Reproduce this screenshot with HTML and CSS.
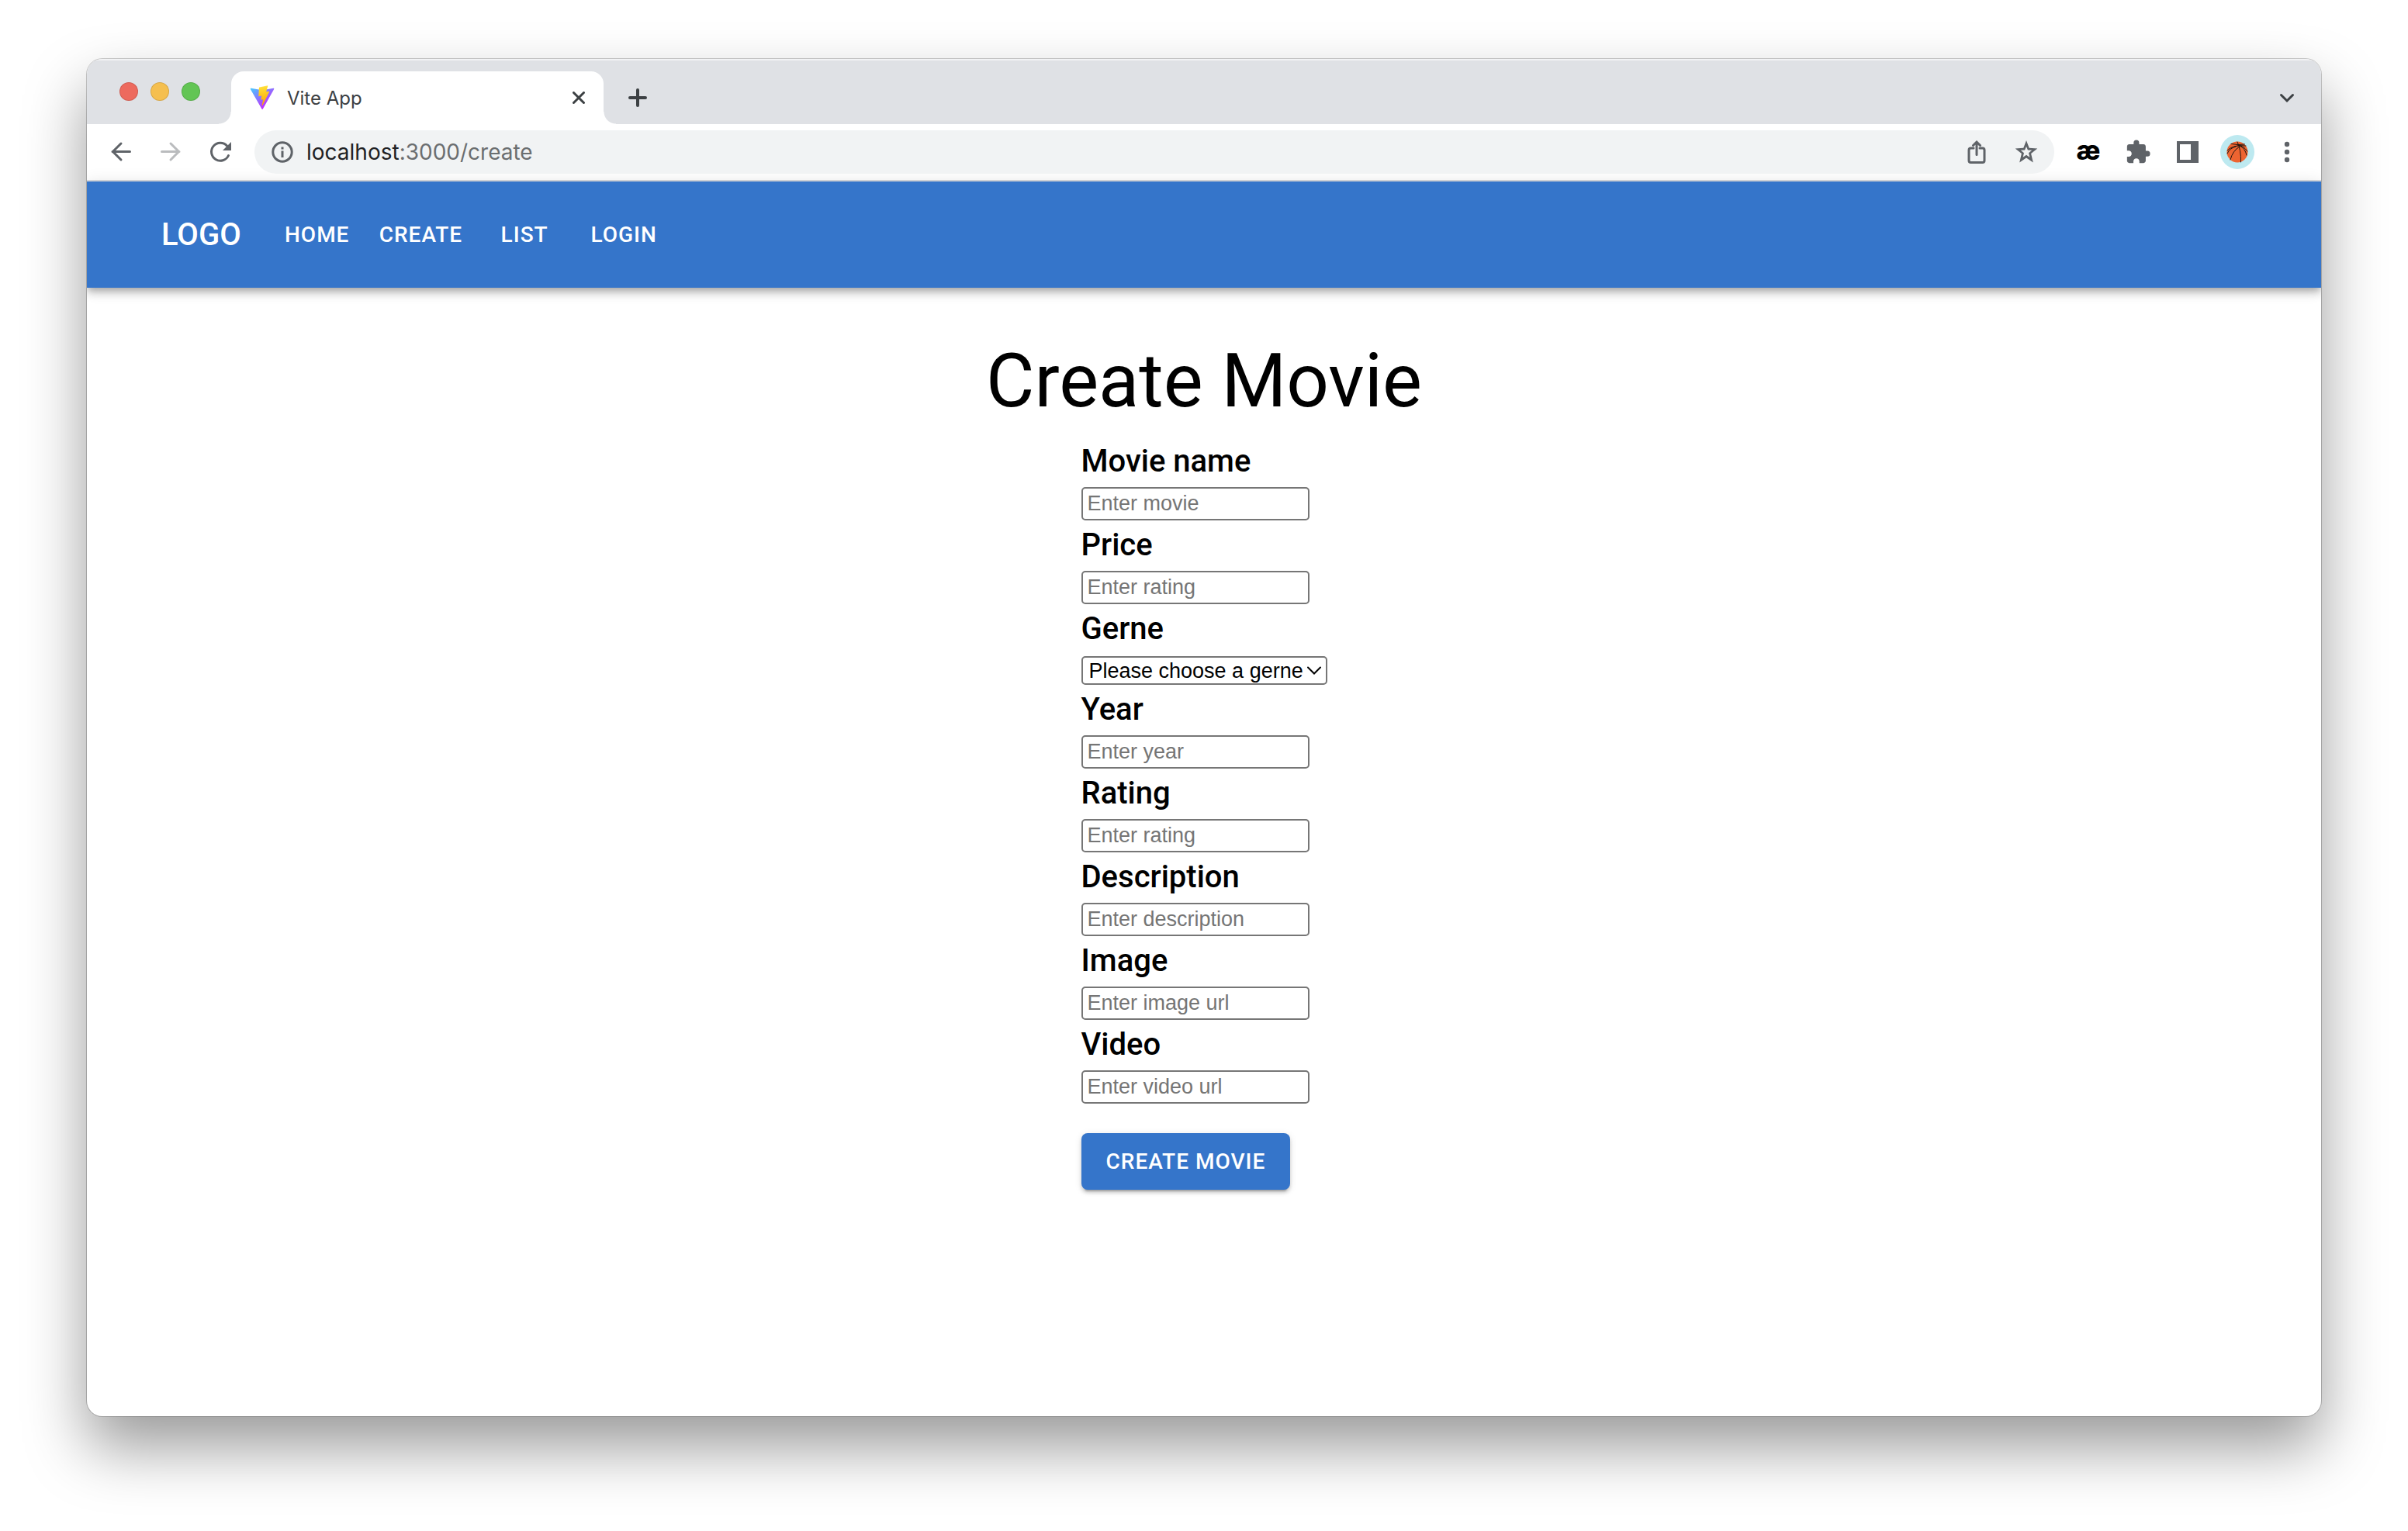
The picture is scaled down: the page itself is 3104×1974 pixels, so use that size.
FILE: index.html
```html
<!DOCTYPE html>
<html lang="en">
<head>
<meta charset="utf-8">
<meta name="viewport" content="width=device-width, initial-scale=1">
<title>Vite App</title>
<link rel="stylesheet" href="styles.css">
</head>
<body>
<div class="window">
  <div class="tab-strip">
    <div class="lights">
      <span class="light light-close"></span>
      <span class="light light-minimize"></span>
      <span class="light light-zoom"></span>
    </div>
    <div class="tab">
      <svg class="favicon" viewBox="0 0 410 404" aria-hidden="true">
        <defs>
          <linearGradient id="vite-a" x1="6" y1="33" x2="235" y2="344" gradientUnits="userSpaceOnUse"><stop stop-color="#41d1ff"/><stop offset="1" stop-color="#bd34fe"/></linearGradient>
          <linearGradient id="vite-b" x1="194" y1="9" x2="236" y2="293" gradientUnits="userSpaceOnUse"><stop stop-color="#ffea83"/><stop offset=".083" stop-color="#ffdd35"/><stop offset="1" stop-color="#ffa800"/></linearGradient>
        </defs>
        <path fill="url(#vite-a)" d="M399.641 59.525 215.643 388.545c-3.799 6.793-13.559 6.833-17.415.073L10.582 59.556c-4.2-7.366 2.098-16.293 10.446-14.801l184.195 32.923c1.175.21 2.378.208 3.553-.006l180.343-32.87c8.319-1.517 14.649 7.337 10.522 14.723z"/>
        <path fill="url(#vite-b)" d="M292.965 1.574 156.801 28.255c-2.238.439-3.906 2.332-4.04 4.609l-8.376 141.464c-.197 3.332 2.863 5.918 6.115 5.168l37.91-8.749c3.547-.818 6.752 2.306 6.023 5.873l-11.263 55.153c-.758 3.712 2.727 6.886 6.352 5.785l23.415-7.114c3.63-1.102 7.118 2.081 6.35 5.796l-17.899 86.633c-1.12 5.419 6.088 8.374 9.094 3.728l2.008-3.103 110.954-221.428c1.858-3.707-1.346-7.935-5.418-7.15l-39.022 7.532c-3.667.707-6.787-2.708-5.752-6.296l25.469-88.291c1.036-3.594-2.095-7.012-5.756-6.291z"/>
      </svg>
      <span class="tab-title">Vite App</span>
      <button class="tab-close" aria-label="Close tab"><svg viewBox="0 0 16 16"><path d="M1.500 1.500l13 13m0-13l-13 13"/></svg></button>
    </div>
    <button class="tool strip-tool" aria-label="New tab"><svg viewBox="0 0 56 56"><path class="bold" d="M28 18v20M18 28h20"/></svg></button>
    <button class="tool strip-tool strip-end" aria-label="Search tabs"><svg viewBox="0 0 56 56"><path d="M20.500 24.500l7.500 7.500 7.500-7.500"/></svg></button>
  </div>

  <div class="toolbar">
    <button class="tool" aria-label="Back"><svg viewBox="0 0 56 56"><path d="M39.500 27.500H17M28 17l-10.500 10.500L28 38"/></svg></button>
    <button class="tool tool-off" aria-label="Forward"><svg viewBox="0 0 56 56"><path d="M16.500 27.500H39M28 17l10.500 10.500L28 38"/></svg></button>
    <button class="tool" aria-label="Reload"><svg viewBox="0 0 56 56"><path d="M38.500 32.500A11.500 11.500 0 1 1 36.500 20"/><path class="solid" d="M42 15v11H31z"/></svg></button>
    <div class="omnibox">
      <svg class="info" viewBox="0 0 28 28" aria-hidden="true"><circle cx="14" cy="14" r="12.200"/><path d="M14 12.500v8.500M14 7.500v3"/></svg>
      <span class="url">localhost<span class="url-path">:3000/create</span></span>
      <button class="tool" aria-label="Share"><svg viewBox="0 0 56 56"><path d="M24 23h-3.500a2.500 2.500 0 0 0-2.500 2.500v13.500a2.500 2.500 0 0 0 2.500 2.500h15a2.500 2.500 0 0 0 2.500-2.500v-13.500a2.500 2.500 0 0 0-2.500-2.500h-3.500M28 31.500v-16M23.500 19.500l4.500-4.500 4.500 4.500"/></svg></button>
      <button class="tool" aria-label="Bookmark"><svg viewBox="0 0 56 56"><path class="solid" fill-rule="evenodd" d="M28 13l3.700 9.700 10.600.8-8.200 6.600 2.700 11.400L28 35.600l-8.800 5.900 2.700-11.400-8.200-6.600 10.600-.8zM28 20.700l-1.900 4.700-5.300.4 4.200 3.400-1.400 5.500 4.400-3 4.400 3-1.400-5.500 4.200-3.400-5.300-.4z"/></svg></button>
    </div>
    <button class="tool ash">æ</button>
    <button class="tool" aria-label="Extensions"><svg viewBox="0 0 24 24" class="puzzle"><path class="solid" d="M20.500 11H19V7c0-1.100-.9-2-2-2h-4V3.500a2.500 2.500 0 0 0-5 0V5H4c-1.100 0-1.990.9-1.990 2v3.800H3.500c1.490 0 2.700 1.210 2.700 2.700s-1.210 2.700-2.700 2.700H2V20c0 1.100.9 2 2 2h3.800v-1.500c0-1.490 1.210-2.700 2.700-2.700s2.700 1.210 2.700 2.700V22H17c1.100 0 2-.9 2-2v-4h1.500a2.500 2.500 0 0 0 0-5z"/></svg></button>
    <button class="tool" aria-label="Side panel"><svg viewBox="0 0 56 56"><path class="solid" fill-rule="evenodd" d="M14 14h28v28H14zM18 18v20h14V18z"/></svg></button>
    <button class="tool" aria-label="Profile"><svg viewBox="0 0 56 56"><circle cx="28" cy="28" r="22" fill="#bde9f0"/><circle cx="28" cy="28" r="13.500" fill="#ed6431"/><path class="seam" d="M20 17.500q9 2 17.500.5M15 26q8-8 24-6M28 15q5 10 4.500 26M41 27q-6-8-13-8M19 38q3-12 12-17M15 30q3-7 11-9M31 20q7 3 9 12"/></svg></button>
    <button class="tool" aria-label="Menu"><svg viewBox="0 0 56 56"><circle class="solid" cx="28" cy="18" r="3.200"/><circle class="solid" cx="28" cy="28" r="3.200"/><circle class="solid" cx="28" cy="38" r="3.200"/></svg></button>
  </div>

  <header class="app-bar">
    <a class="logo" href="#">LOGO</a>
    <nav class="nav">
      <a href="#">HOME</a>
      <a href="#">CREATE</a>
      <a href="#">LIST</a>
      <a href="#">LOGIN</a>
    </nav>
  </header>

  <main class="page">
    <h1>Create Movie</h1>
    <form class="form">
      <label for="name">Movie name</label>
      <input id="name" type="text" placeholder="Enter movie">
      <label for="price">Price</label>
      <input id="price" type="text" placeholder="Enter rating">
      <label for="genre">Gerne</label>
      <div class="select">
        <select id="genre"><option>Please choose a gerne</option></select>
        <svg viewBox="0 0 18 12" aria-hidden="true"><path d="M1 1.500l8 8 8-8"/></svg>
      </div>
      <label for="year">Year</label>
      <input id="year" type="text" placeholder="Enter year">
      <label for="rating">Rating</label>
      <input id="rating" type="text" placeholder="Enter rating">
      <label for="description">Description</label>
      <input id="description" type="text" placeholder="Enter description">
      <label for="image">Image</label>
      <input id="image" type="text" placeholder="Enter image url">
      <label for="video">Video</label>
      <input id="video" type="text" placeholder="Enter video url">
      <button class="submit" type="button">CREATE MOVIE</button>
    </form>
  </main>
</div>
</body>
</html>
```
FILE: styles.css
```css
* {
  box-sizing: border-box;
}

body {
  margin: 0;
  padding: 76px 112px 148px;
  background: #fff;
  color: #000;
  font-family: Roboto, "Liberation Sans", sans-serif;
}

button {
  margin: 0;
  padding: 0;
  border: 0;
  background: none;
}

a {
  color: inherit;
  text-decoration: none;
}

/* Browser window */
.window {
  min-height: calc(100vh - 224px);
  overflow: hidden;
  border-radius: 20px;
  background: #fff;
  box-shadow: 0 0 0 1px rgba(0, 0, 0, 0.2), 0 40px 80px rgba(0, 0, 0, 0.4);
}

.tab-strip {
  display: flex;
  align-items: flex-end;
  height: 84px;
  padding: 0 16px 0 42px;
  background: #dfe1e5;
  box-shadow: inset 0 2px 1px rgba(255, 255, 255, 0.6);
}

.lights {
  display: flex;
  align-self: center;
  gap: 16px;
  margin-right: 40px;
}

.light {
  width: 24px;
  height: 24px;
  border: 1px solid rgba(0, 0, 0, 0.12);
  border-radius: 50%;
}

.light-close { background: #ed6a5e; }
.light-minimize { background: #f5bf4f; }
.light-zoom { background: #62c554; }

.tab {
  position: relative;
  display: flex;
  align-items: center;
  gap: 16px;
  width: 480px;
  height: 68px;
  padding: 0 24px;
  border-radius: 16px 16px 0 0;
  background: #fff;
  color: #3c4043;
}

.tab::before,
.tab::after {
  content: "";
  position: absolute;
  bottom: 0;
  width: 16px;
  height: 16px;
}

.tab::before {
  right: 100%;
  background: radial-gradient(circle at 0 0, transparent 15px, #fff 16px);
}

.tab::after {
  left: 100%;
  background: radial-gradient(circle at 100% 0, transparent 15px, #fff 16px);
}

.tab-title {
  flex: 1;
  font-family: Inter, sans-serif;
  font-size: 24px;
}

.tab-close,
.tab-close svg {
  display: block;
  width: 16px;
  height: 16px;
  color: #3c4043;
}

svg {
  fill: none;
  stroke: currentColor;
  stroke-linecap: round;
}

.favicon {
  width: 32px;
  height: 32px;
  stroke: none;
}

.tab-close svg {
  stroke-width: 3;
}

.tool {
  display: flex;
  align-items: center;
  justify-content: center;
  flex: none;
  width: 56px;
  height: 56px;
  color: #5f6368;
}

.tool svg {
  width: 56px;
  height: 56px;
  stroke-width: 3;
}

.tool .puzzle {
  width: 34px;
  height: 34px;
}

.tool circle {
  stroke: none;
}

.tool .solid {
  fill: currentColor;
  stroke: none;
}

.tool .bold {
  stroke-width: 4;
}

.tool .seam {
  stroke: #1f1712;
  stroke-width: 1;
}

.tool-off {
  color: #babcbe;
}

.strip-tool {
  height: 68px;
  margin-left: 16px;
  color: #3c4043;
}

.strip-end {
  margin-left: auto;
}

.toolbar {
  display: flex;
  align-items: center;
  gap: 8px;
  height: 74px;
  padding: 0 16px;
  border-bottom: 2px solid #dadce0;
}

.omnibox {
  display: flex;
  align-items: center;
  flex: 1;
  gap: 8px;
  height: 56px;
  margin: 0 8px;
  padding: 0 8px 0 22px;
  border-radius: 28px;
  background: #f1f3f4;
}

.info {
  width: 28px;
  height: 28px;
  color: #5f6368;
  stroke-width: 3;
  stroke-linecap: butt;
}

.url {
  flex: 1;
  padding-left: 9px;
  color: #202124;
  font-family: Inter, sans-serif;
  font-size: 28px;
}

.url-path {
  color: #6b6e70;
}

.ash {
  color: #000;
  font-family: Inter, sans-serif;
  font-size: 34px;
  font-weight: 800;
  line-height: 52px;
  align-items: flex-start;
}

/* Movie app */
.app-bar {
  display: flex;
  align-items: center;
  gap: 34px;
  height: 137px;
  padding: 0 96px;
  background: #3575ca;
  box-shadow: 0 4px 8px -2px rgba(0, 0, 0, 0.2), 0 8px 10px rgba(0, 0, 0, 0.14), 0 2px 20px rgba(0, 0, 0, 0.12);
  color: #fff;
}

.logo {
  font-size: 40px;
  font-weight: 500;
  line-height: 64px;
}

.nav {
  display: flex;
}

.nav a {
  min-width: 128px;
  padding: 12px 16px;
  font-size: 28px;
  font-weight: 500;
  line-height: 49px;
  letter-spacing: 1px;
  text-align: center;
}

.page {
  display: flex;
  flex-direction: column;
  align-items: center;
  gap: 16px;
  padding: 64px 32px;
}

h1 {
  margin: 0;
  font-size: 96px;
  font-weight: 400;
  line-height: 112px;
}

.form {
  display: flex;
  flex-direction: column;
  align-items: flex-start;
}

.form label {
  font-size: 40px;
  font-weight: 500;
  line-height: 64px;
}

.form input,
.form select {
  border: 2px solid #767676;
  border-radius: 5px;
  background: #fff;
  color: #000;
  font-family: "Liberation Sans", Arial, sans-serif;
  font-size: 27px;
}

.form input {
  width: 294px;
  height: 43px;
  margin-top: 1px;
  padding: 0 6px;
}

.form input::placeholder {
  color: #757575;
}

.select {
  display: grid;
  align-items: center;
  width: 317px;
  margin-top: 3px;
}

.select select,
.select svg {
  grid-area: 1 / 1;
}

.select select {
  height: 37px;
  padding: 0 0 0 8px;
  appearance: none;
}

.select svg {
  justify-self: end;
  width: 18px;
  height: 12px;
  margin-right: 8px;
  stroke-width: 2;
  pointer-events: none;
}

.submit {
  height: 73px;
  margin-top: 38px;
  padding: 0 32px;
  border-radius: 8px;
  background: #3575ca;
  box-shadow: 0 6px 2px -4px rgba(0, 0, 0, 0.2), 0 4px 4px rgba(0, 0, 0, 0.14), 0 2px 10px rgba(0, 0, 0, 0.12);
  color: #fff;
  font-family: inherit;
  font-size: 28px;
  font-weight: 500;
  letter-spacing: 1px;
}
```
